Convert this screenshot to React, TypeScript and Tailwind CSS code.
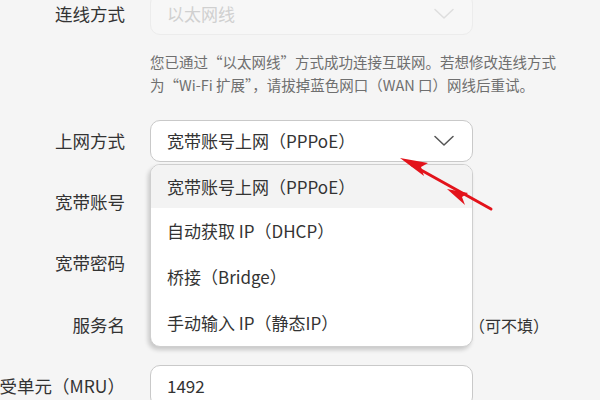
import React from 'react';

const font = { fontFamily: '"Noto Sans CJK SC", "Noto Sans", sans-serif' };

const options = [
  '宽带账号上网（PPPoE）',
  '自动获取 IP（DHCP）',
  '桥接（Bridge）',
  '手动输入 IP（静态IP）',
];

const Chevron: React.FC<{ color: string }> = ({ color }) => (
  <svg width="20" height="12" viewBox="0 0 20 12" fill="none">
    <path d="M1 1.5 L10 10 L19 1.5" stroke={color} strokeWidth="1.5" strokeLinecap="round" strokeLinejoin="round" />
  </svg>
);

const Label: React.FC<{ children: React.ReactNode }> = ({ children }) => (
  <div className="w-[125px] shrink-0 flex justify-end whitespace-nowrap text-[17.5px] text-[#333]">{children}</div>
);

const App: React.FC = () => {
  return (
    <div className="relative w-[600px] h-[400px] overflow-hidden bg-[#f5f5f5]" style={font}>
      <div className="flex flex-col -mt-[7px]">
        {/* 连线方式 */}
        <div className="flex items-center gap-[25px]">
          <Label>连线方式</Label>
          <div className="w-[323px] h-[42px] rounded-[10px] border border-[#ececec] bg-[#f7f7f7] flex items-center justify-between pl-[16px] pr-[18px]">
            <span className="text-[17px] text-[#d0d0d0]">以太网线</span>
            <Chevron color="#dedede" />
          </div>
        </div>

        <div className="ml-[150px] mt-[15px] text-[14.5px] leading-[23px] text-[#6f6f6f]">
          <p>您已通过“以太网线”方式成功连接互联网。若想修改连线方式</p>
          <p>为“Wi-Fi 扩展”，请拔掉蓝色网口（WAN 口）网线后重试。</p>
        </div>

        {/* 上网方式 */}
        <div className="flex items-center gap-[25px] mt-[24px]">
          <Label>上网方式</Label>
          <div className="relative">
            <div className="w-[323px] h-[42px] rounded-[10px] border border-[#c9c9c9] bg-white flex items-center justify-between pl-[16px] pr-[18px]">
              <span className="text-[17px] text-[#333]">宽带账号上网（PPPoE）</span>
              <Chevron color="#555" />
            </div>
            <div className="absolute left-0 top-[44px] z-10 w-[323px] rounded-[10px] border border-[#cfcfcf] bg-white overflow-hidden shadow-[-2px_3px_4px_rgba(0,0,0,0.18)]">
              {options.map((o, i) => (
                <div
                  key={o}
                  className={`flex items-center pl-[16px] text-[17px] text-[#333] ${i === 0 ? 'h-[43px] bg-[#f3f3f3]' : 'h-[46px]'}`}
                >
                  {o}
                </div>
              ))}
            </div>
          </div>
        </div>

        <div className="flex items-center gap-[25px] mt-[19px]">
          <Label>宽带账号</Label>
          <div className="w-[323px] h-[42px] rounded-[10px] border border-[#c9c9c9] bg-white" />
        </div>
        <div className="flex items-center gap-[25px] mt-[19px]">
          <Label>宽带密码</Label>
          <div className="w-[323px] h-[42px] rounded-[10px] border border-[#c9c9c9] bg-white" />
        </div>
        <div className="flex items-center gap-[25px] mt-[20px]">
          <Label>服务名</Label>
          <div className="w-[323px] h-[42px] rounded-[10px] border border-[#c9c9c9] bg-white" />
          <span className="-ml-[29px] text-[16px] text-[#333]">（可不填）</span>
        </div>
        <div className="flex items-center gap-[25px] mt-[19px]">
          <Label>最大接受单元（MRU）</Label>
          <div className="w-[323px] h-[42px] rounded-[10px] border border-[#c9c9c9] bg-white flex items-center pl-[16px]">
            <span className="text-[17px] text-[#333]">1492</span>
          </div>
        </div>
      </div>

      {/* red annotation arrow */}
      <svg className="absolute left-0 top-0 z-20 pointer-events-none" width="600" height="400" viewBox="0 0 600 400">
        <line x1="491" y1="209" x2="412" y2="165" stroke="#e3131b" strokeWidth="3" strokeLinecap="round" />
        <path d="M400 158 L428 163 L421 167 L424 176 Z" fill="#e3131b" />
        <path d="M447 189 L468 193 L462 197 L465 205 Z" fill="#e3131b" />
      </svg>
    </div>
  );
};

export default App;
